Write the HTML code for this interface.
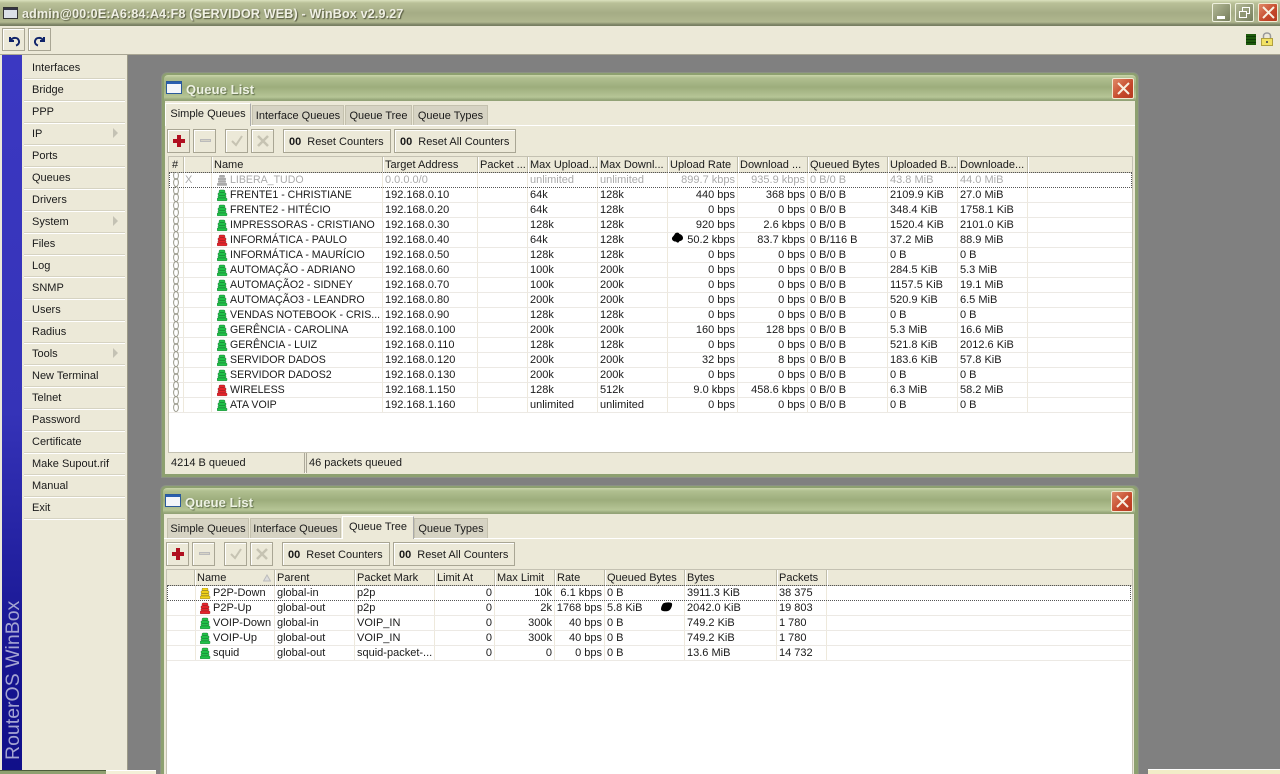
<!DOCTYPE html>
<html><head><meta charset="utf-8"><style>
html,body{margin:0;padding:0;width:1280px;height:774px;overflow:hidden;background:#808080}
body{position:relative;font:11px "Liberation Sans",sans-serif;color:#1a1a1a}
div,span,svg{position:absolute;box-sizing:border-box}
.t{white-space:nowrap;line-height:15px;height:15px;margin-top:1px}
.n{font-size:10.6px}
.r{text-align:right}
.g{color:#aaa}
.mi{left:24px;width:101px;height:22px;border-bottom:1px solid #d6d3c2;box-shadow:0 1px 0 #fff;padding:0}
.mi span{left:8px;top:4px;line-height:15px;white-space:nowrap;font-size:11px}
.ar{left:89px;top:5px;width:0;height:0;border-left:5px solid #c4c2b4;border-top:5px solid transparent;border-bottom:5px solid transparent}
.win{background:#ece9d8;border-left:3px solid #8da070;border-right:3px solid #8da070}
.tb{background:linear-gradient(#cbd6ab 0,#b0bf90 3px,#9dad7c 12px,#b6c596 22px,#93a377 25px)}
.cl{width:22px;height:21px;background:linear-gradient(135deg,#e08a68,#c4472a 60%,#b63a20);border:1px solid #f2ead2;border-radius:2px}
.tab{background:#d6d3c3;border:1px solid #c4c1ae;border-bottom:0;text-align:center;line-height:21px;white-space:nowrap;font-size:11px;height:20px}
.tab.a{background:#ece9d8;border:1px solid #fff;border-right:1px solid #aaa;border-bottom:0;height:23px;line-height:20px;z-index:2}
.btn{height:24px;background:#ece9d8;border:1px solid #a9a694;box-shadow:inset 1px 1px 0 #fff;white-space:nowrap;line-height:24px;font-size:11px}
.btn b{font-size:11px;margin:0 6px 0 5px;letter-spacing:0}
.list{background:#fff;border:1px solid #c4c1b2;overflow:hidden}
.hd{height:16px;background:#ece9d8;top:0;left:0;border-bottom:1px solid #c4c1b2}
.h{top:0;height:16px;border-right:1px solid #c0bdaa;box-shadow:1px 0 0 #fff;padding-left:2px;line-height:17px;white-space:nowrap;overflow:hidden;font-size:11px}
.ln{left:0;height:1px;background:#ece9e4}
.vl{top:16px;width:1px;background:#eee9dc}
.foc{left:0;height:16px;border:1px dotted #555}
.st{top:0;height:20px;background:#ece9d8;border-right:1px solid #aca899;line-height:21px;padding-left:3px;white-space:nowrap;font-size:11px}
</style></head><body>
<svg width="0" height="0" style="left:0;top:0"><defs>
<g id="ic"><rect x="2" y="0" width="6" height="2.6" rx="1.2"/><rect x="1" y="2.800" width="8" height="2.4" rx=".8"/><rect x="1" y="5.400" width="8" height="2.4" rx=".8"/><rect x="0" y="8" width="10" height="2.800" rx=".8"/></g>
<g id="ch" fill="none" stroke="#9a9a8c" stroke-width="1"><ellipse cx="3" cy="3.5" rx="2.400" ry="4"/><ellipse cx="3" cy="10.500" rx="2.400" ry="4"/></g>
</defs></svg>

<div style="left:0;top:0;width:1280px;height:26px;background:linear-gradient(#dbe2bf 0,#b9c098 3px,#a5ac85 13px,#b0b78f 22px,#787f62 25px)"></div>
<svg style="left:3px;top:7px" width="15" height="12"><rect x=".5" y=".5" width="14" height="11" fill="#dce0e8" stroke="#333"/><rect x="1" y="1" width="13" height="2" fill="#334"/></svg>
<div class="t" style="left:22px;top:6px;font-weight:bold;font-size:12.5px;letter-spacing:.18px;color:#f0f0e4;text-shadow:1px 1px 1px #55583f">admin@00:0E:A6:84:A4:F8 (SERVIDOR WEB) - WinBox v2.9.27</div>
<div style="left:1212px;top:3px;width:19px;height:19px;background:linear-gradient(135deg,#b3b996,#767d5c);border:1px solid #eef0de;border-radius:2px"><div style="left:4px;top:12px;width:8px;height:3px;background:#fff"></div></div>
<div style="left:1235px;top:3px;width:19px;height:19px;background:linear-gradient(135deg,#b3b996,#767d5c);border:1px solid #eef0de;border-radius:2px"><div style="left:6px;top:3px;width:8px;height:7px;border:1px solid #fff"></div><div style="left:3px;top:7px;width:8px;height:7px;border:1px solid #fff;background:#8f9673"></div></div>
<div class="cl" style="left:1258px;top:3px;width:20px;height:19px"><svg style="left:3px;top:2px" width="13" height="13"><path d="M1 1L12 12M12 1L1 12" stroke="#f8efe0" stroke-width="2"/></svg></div>

<div style="left:0;top:26px;width:1280px;height:29px;background:#ece9d8;border-bottom:1px solid #a9a694"></div>
<div class="btn" style="left:2px;top:28px;width:23px;height:23px"><svg style="left:3px;top:3px" width="16" height="16"><path d="M4 5L4 9L8 9M4.5 8.5C7 5 12 5 13 9C13.5 11 12 13 10 13.5" fill="none" stroke="#10246a" stroke-width="2"/></svg></div>
<div class="btn" style="left:28px;top:28px;width:23px;height:23px"><svg style="left:3px;top:3px" width="16" height="16"><path d="M12 5L12 9L8 9M11.5 8.5C9 5 4 5 3 9C2.5 11 4 13 6 13.5" fill="none" stroke="#10246a" stroke-width="2"/></svg></div>
<div style="left:1246px;top:34px;width:10px;height:11px;background:repeating-linear-gradient(#1e5a0c 0,#1e5a0c 2px,#0f3d06 2px,#0f3d06 3px)"></div>
<svg style="left:1260px;top:32px" width="14" height="14"><path d="M3.5 7V4C3.5 0 10.500 0 10.500 4V7" fill="none" stroke="#999" stroke-width="1.500"/><rect x="1.500" y="6.500" width="11" height="7" fill="#f2e264" stroke="#b0a040"/><rect x="6" y="9" width="2" height="2" fill="#665"/></svg>

<!-- sidebar -->
<div style="left:0;top:55px;width:128px;height:715px;background:#ece9d8;border-right:1px solid #9c9a88"></div>
<div style="left:2px;top:55px;width:20px;height:715px;background:linear-gradient(#3b38c2 0,#3533b8 50%,#161490 85%,#11108a 100%)"></div>
<div class="t" style="left:13px;top:759px;font-size:19.5px;line-height:20px;height:20px;color:#a4a4d2;transform-origin:0 0;transform:rotate(-90deg) translateY(-10px)">RouterOS WinBox</div>
<div class="mi" style="top:57px"><span>Interfaces</span></div>
<div class="mi" style="top:79px"><span>Bridge</span></div>
<div class="mi" style="top:101px"><span>PPP</span></div>
<div class="mi" style="top:123px"><span>IP</span><div class="ar"></div></div>
<div class="mi" style="top:145px"><span>Ports</span></div>
<div class="mi" style="top:167px"><span>Queues</span></div>
<div class="mi" style="top:189px"><span>Drivers</span></div>
<div class="mi" style="top:211px"><span>System</span><div class="ar"></div></div>
<div class="mi" style="top:233px"><span>Files</span></div>
<div class="mi" style="top:255px"><span>Log</span></div>
<div class="mi" style="top:277px"><span>SNMP</span></div>
<div class="mi" style="top:299px"><span>Users</span></div>
<div class="mi" style="top:321px"><span>Radius</span></div>
<div class="mi" style="top:343px"><span>Tools</span><div class="ar"></div></div>
<div class="mi" style="top:365px"><span>New Terminal</span></div>
<div class="mi" style="top:387px"><span>Telnet</span></div>
<div class="mi" style="top:409px"><span>Password</span></div>
<div class="mi" style="top:431px"><span>Certificate</span></div>
<div class="mi" style="top:453px"><span>Make Supout.rif</span></div>
<div class="mi" style="top:475px"><span>Manual</span></div>
<div class="mi" style="top:497px;border-bottom:1px solid #d6d3c2"><span>Exit</span></div>

<!-- bottom strips -->
<div style="left:0;top:770px;width:106px;height:4px;background:#8fa070;border-top:1px solid #4d5c3a"></div>
<div style="left:106px;top:770px;width:50px;height:4px;background:#f4f0d8;border-top:1px solid #fff"></div>
<div style="left:1148px;top:769px;width:132px;height:5px;background:#f2ecc8;border-top:1px solid #fff"></div>

<!-- TOP WINDOW -->
<div style="left:162px;top:73px;width:976px;height:404px;background:#8da070;border-radius:5px 5px 0 0;box-shadow:0 0 0 1px #8b9185"></div>
<div class="tb" style="left:164px;top:75px;width:972px;height:26px;border-radius:4px 4px 0 0"></div>
<svg style="left:166px;top:81px" width="16" height="14"><rect x=".5" y=".5" width="15" height="12" fill="#f4f6fa" stroke="#2a5a9a"/><rect x="1" y="1" width="14" height="2" fill="#2a5fb0"/></svg>
<div class="t" style="left:186px;top:81px;font-size:13px;font-weight:bold;color:#eef2e4;text-shadow:1px 1px 1px #5d6b48;letter-spacing:.1px">Queue List</div>
<div class="cl" style="left:1112px;top:78px"><svg style="left:4px;top:3px" width="13" height="13"><path d="M1 1L12 12M12 1L1 12" stroke="#f8efe0" stroke-width="2"/></svg></div>
<div style="left:165px;top:101px;width:970px;height:373px;background:#ece9d8"></div>
<div style="left:165px;top:125px;width:970px;height:1px;background:#fff"></div>
<div class="tab a" style="left:165px;top:103px;width:86px">Simple Queues</div>
<div class="tab" style="left:252px;top:105px;width:92px">Interface Queues</div>
<div class="tab" style="left:345px;top:105px;width:67px">Queue Tree</div>
<div class="tab" style="left:413px;top:105px;width:75px">Queue Types</div>
<div class="btn" style="left:167px;top:129px;width:23px"><svg style="left:4px;top:4px" width="14" height="14"><path d="M7 1V13M1 7H13" stroke="#b01020" stroke-width="4"/></svg></div>
<div class="btn" style="left:193px;top:129px;width:23px"><div style="left:6px;top:9px;width:11px;height:3px;background:#d6d3c6;border:1px solid #bbb"></div></div>
<div class="btn" style="left:225px;top:129px;width:23px"><svg style="left:4px;top:4px" width="14" height="14"><path d="M2 7L6 11L12 2" fill="none" stroke="#c6c3b2" stroke-width="2"/></svg></div>
<div class="btn" style="left:251px;top:129px;width:23px"><svg style="left:4px;top:4px" width="14" height="14"><path d="M2 2L12 12M12 2L2 12" fill="none" stroke="#c6c3b2" stroke-width="2.500"/></svg></div>
<div class="btn" style="left:283px;top:129px;width:108px"><b>00</b>Reset Counters</div>
<div class="btn" style="left:394px;top:129px;width:122px"><b>00</b>Reset All Counters</div>

<div class="list" style="left:168px;top:156px;width:965px;height:297px">
<div class="hd" style="width:963px">
<div class="h" style="left:0;width:15px;padding-left:3px">#</div>
<div class="h" style="left:15px;width:28px"></div>
<div class="h" style="left:43px;width:171px">Name</div>
<div class="h" style="left:214px;width:95px">Target Address</div>
<div class="h" style="left:309px;width:50px">Packet ...</div>
<div class="h" style="left:359px;width:70px">Max Upload...</div>
<div class="h" style="left:429px;width:70px">Max Downl...</div>
<div class="h" style="left:499px;width:70px">Upload Rate</div>
<div class="h" style="left:569px;width:70px">Download ...</div>
<div class="h" style="left:639px;width:80px">Queued Bytes</div>
<div class="h" style="left:719px;width:70px">Uploaded B...</div>
<div class="h" style="left:789px;width:70px">Downloade...</div>
</div>
</div>
<!-- grid lines top -->
<div class="vl" style="left:183px;top:172px;height:240px"></div><div class="vl" style="left:211px;top:172px;height:240px"></div><div class="vl" style="left:382px;top:172px;height:240px"></div><div class="vl" style="left:477px;top:172px;height:240px"></div><div class="vl" style="left:527px;top:172px;height:240px"></div><div class="vl" style="left:597px;top:172px;height:240px"></div><div class="vl" style="left:667px;top:172px;height:240px"></div><div class="vl" style="left:737px;top:172px;height:240px"></div><div class="vl" style="left:807px;top:172px;height:240px"></div><div class="vl" style="left:887px;top:172px;height:240px"></div><div class="vl" style="left:957px;top:172px;height:240px"></div><div class="vl" style="left:1027px;top:172px;height:240px"></div>
<div class="ln" style="left:169px;top:202px;width:963px"></div><div class="ln" style="left:169px;top:217px;width:963px"></div><div class="ln" style="left:169px;top:232px;width:963px"></div><div class="ln" style="left:169px;top:247px;width:963px"></div><div class="ln" style="left:169px;top:262px;width:963px"></div><div class="ln" style="left:169px;top:277px;width:963px"></div><div class="ln" style="left:169px;top:292px;width:963px"></div><div class="ln" style="left:169px;top:307px;width:963px"></div><div class="ln" style="left:169px;top:322px;width:963px"></div><div class="ln" style="left:169px;top:337px;width:963px"></div><div class="ln" style="left:169px;top:352px;width:963px"></div><div class="ln" style="left:169px;top:367px;width:963px"></div><div class="ln" style="left:169px;top:382px;width:963px"></div><div class="ln" style="left:169px;top:397px;width:963px"></div><div class="ln" style="left:169px;top:412px;width:963px"></div>
<div class="foc" style="left:169px;top:172px;width:963px"></div>

<!-- chains -->
<svg style="left:173px;top:172px" width="7" height="240"><use href="#ch" y="0"/><use href="#ch" y="15"/><use href="#ch" y="30"/><use href="#ch" y="45"/><use href="#ch" y="60"/><use href="#ch" y="75"/><use href="#ch" y="90"/><use href="#ch" y="105"/><use href="#ch" y="120"/><use href="#ch" y="135"/><use href="#ch" y="150"/><use href="#ch" y="165"/><use href="#ch" y="180"/><use href="#ch" y="195"/><use href="#ch" y="210"/><use href="#ch" y="225"/></svg>
<!-- status icons top -->
<svg style="left:217px;top:175px" width="11" height="236">
<use href="#ic" y="0" fill="#aaa"/>
<g fill="#22c34a" stroke="#0a6a24" stroke-width=".4"><use href="#ic" y="15"/><use href="#ic" y="30"/><use href="#ic" y="45"/></g>
<g fill="#e8242c" stroke="#801414" stroke-width=".4"><use href="#ic" y="60"/></g>
<g fill="#22c34a" stroke="#0a6a24" stroke-width=".4"><use href="#ic" y="75"/><use href="#ic" y="90"/><use href="#ic" y="105"/><use href="#ic" y="120"/><use href="#ic" y="135"/><use href="#ic" y="150"/><use href="#ic" y="165"/><use href="#ic" y="180"/><use href="#ic" y="195"/></g>
<g fill="#e8242c" stroke="#801414" stroke-width=".4"><use href="#ic" y="210"/></g>
<g fill="#22c34a" stroke="#0a6a24" stroke-width=".4"><use href="#ic" y="225"/></g>
</svg>

<div class="t g" style="left:185px;top:172px">X</div>
<div class="t g n" style="left:230px;top:172px">LIBERA_TUDO</div><div class="t g" style="left:385px;top:172px">0.0.0.0/0</div><div class="t g" style="left:530px;top:172px">unlimited</div><div class="t g" style="left:600px;top:172px">unlimited</div><div class="t g r" style="left:667px;width:68px;top:172px">899.7 kbps</div><div class="t g r" style="left:737px;width:68px;top:172px">935.9 kbps</div><div class="t g" style="left:810px;top:172px">0 B/0 B</div><div class="t g" style="left:890px;top:172px">43.8 MiB</div><div class="t g" style="left:960px;top:172px">44.0 MiB</div>

<div class="t n" style="left:230px;top:187px">FRENTE1 - CHRISTIANE</div><div class="t" style="left:385px;top:187px">192.168.0.10</div><div class="t" style="left:530px;top:187px">64k</div><div class="t" style="left:600px;top:187px">128k</div><div class="t r" style="left:667px;width:68px;top:187px">440 bps</div><div class="t r" style="left:737px;width:68px;top:187px">368 bps</div><div class="t" style="left:810px;top:187px">0 B/0 B</div><div class="t" style="left:890px;top:187px">2109.9 KiB</div><div class="t" style="left:960px;top:187px">27.0 MiB</div>

<div class="t n" style="left:230px;top:202px">FRENTE2 - HITÉCIO</div><div class="t" style="left:385px;top:202px">192.168.0.20</div><div class="t" style="left:530px;top:202px">64k</div><div class="t" style="left:600px;top:202px">128k</div><div class="t r" style="left:667px;width:68px;top:202px">0 bps</div><div class="t r" style="left:737px;width:68px;top:202px">0 bps</div><div class="t" style="left:810px;top:202px">0 B/0 B</div><div class="t" style="left:890px;top:202px">348.4 KiB</div><div class="t" style="left:960px;top:202px">1758.1 KiB</div>

<div class="t n" style="left:230px;top:217px">IMPRESSORAS - CRISTIANO</div><div class="t" style="left:385px;top:217px">192.168.0.30</div><div class="t" style="left:530px;top:217px">128k</div><div class="t" style="left:600px;top:217px">128k</div><div class="t r" style="left:667px;width:68px;top:217px">920 bps</div><div class="t r" style="left:737px;width:68px;top:217px">2.6 kbps</div><div class="t" style="left:810px;top:217px">0 B/0 B</div><div class="t" style="left:890px;top:217px">1520.4 KiB</div><div class="t" style="left:960px;top:217px">2101.0 KiB</div>

<div class="t n" style="left:230px;top:232px">INFORMÁTICA - PAULO</div><div class="t" style="left:385px;top:232px">192.168.0.40</div><div class="t" style="left:530px;top:232px">64k</div><div class="t" style="left:600px;top:232px">128k</div><div class="t r" style="left:667px;width:68px;top:232px">50.2 kbps</div><div class="t r" style="left:737px;width:68px;top:232px">83.7 kbps</div><div class="t" style="left:810px;top:232px">0 B/116 B</div><div class="t" style="left:890px;top:232px">37.2 MiB</div><div class="t" style="left:960px;top:232px">88.9 MiB</div>

<div class="t n" style="left:230px;top:247px">INFORMÁTICA - MAURÍCIO</div><div class="t" style="left:385px;top:247px">192.168.0.50</div><div class="t" style="left:530px;top:247px">128k</div><div class="t" style="left:600px;top:247px">128k</div><div class="t r" style="left:667px;width:68px;top:247px">0 bps</div><div class="t r" style="left:737px;width:68px;top:247px">0 bps</div><div class="t" style="left:810px;top:247px">0 B/0 B</div><div class="t" style="left:890px;top:247px">0 B</div><div class="t" style="left:960px;top:247px">0 B</div>

<div class="t n" style="left:230px;top:262px">AUTOMAÇÃO - ADRIANO</div><div class="t" style="left:385px;top:262px">192.168.0.60</div><div class="t" style="left:530px;top:262px">100k</div><div class="t" style="left:600px;top:262px">200k</div><div class="t r" style="left:667px;width:68px;top:262px">0 bps</div><div class="t r" style="left:737px;width:68px;top:262px">0 bps</div><div class="t" style="left:810px;top:262px">0 B/0 B</div><div class="t" style="left:890px;top:262px">284.5 KiB</div><div class="t" style="left:960px;top:262px">5.3 MiB</div>

<div class="t n" style="left:230px;top:277px">AUTOMAÇÃO2 - SIDNEY</div><div class="t" style="left:385px;top:277px">192.168.0.70</div><div class="t" style="left:530px;top:277px">100k</div><div class="t" style="left:600px;top:277px">200k</div><div class="t r" style="left:667px;width:68px;top:277px">0 bps</div><div class="t r" style="left:737px;width:68px;top:277px">0 bps</div><div class="t" style="left:810px;top:277px">0 B/0 B</div><div class="t" style="left:890px;top:277px">1157.5 KiB</div><div class="t" style="left:960px;top:277px">19.1 MiB</div>

<div class="t n" style="left:230px;top:292px">AUTOMAÇÃO3 - LEANDRO</div><div class="t" style="left:385px;top:292px">192.168.0.80</div><div class="t" style="left:530px;top:292px">200k</div><div class="t" style="left:600px;top:292px">200k</div><div class="t r" style="left:667px;width:68px;top:292px">0 bps</div><div class="t r" style="left:737px;width:68px;top:292px">0 bps</div><div class="t" style="left:810px;top:292px">0 B/0 B</div><div class="t" style="left:890px;top:292px">520.9 KiB</div><div class="t" style="left:960px;top:292px">6.5 MiB</div>

<div class="t n" style="left:230px;top:307px">VENDAS NOTEBOOK - CRIS...</div><div class="t" style="left:385px;top:307px">192.168.0.90</div><div class="t" style="left:530px;top:307px">128k</div><div class="t" style="left:600px;top:307px">128k</div><div class="t r" style="left:667px;width:68px;top:307px">0 bps</div><div class="t r" style="left:737px;width:68px;top:307px">0 bps</div><div class="t" style="left:810px;top:307px">0 B/0 B</div><div class="t" style="left:890px;top:307px">0 B</div><div class="t" style="left:960px;top:307px">0 B</div>

<div class="t n" style="left:230px;top:322px">GERÊNCIA - CAROLINA</div><div class="t" style="left:385px;top:322px">192.168.0.100</div><div class="t" style="left:530px;top:322px">200k</div><div class="t" style="left:600px;top:322px">200k</div><div class="t r" style="left:667px;width:68px;top:322px">160 bps</div><div class="t r" style="left:737px;width:68px;top:322px">128 bps</div><div class="t" style="left:810px;top:322px">0 B/0 B</div><div class="t" style="left:890px;top:322px">5.3 MiB</div><div class="t" style="left:960px;top:322px">16.6 MiB</div>

<div class="t n" style="left:230px;top:337px">GERÊNCIA - LUIZ</div><div class="t" style="left:385px;top:337px">192.168.0.110</div><div class="t" style="left:530px;top:337px">128k</div><div class="t" style="left:600px;top:337px">128k</div><div class="t r" style="left:667px;width:68px;top:337px">0 bps</div><div class="t r" style="left:737px;width:68px;top:337px">0 bps</div><div class="t" style="left:810px;top:337px">0 B/0 B</div><div class="t" style="left:890px;top:337px">521.8 KiB</div><div class="t" style="left:960px;top:337px">2012.6 KiB</div>

<div class="t n" style="left:230px;top:352px">SERVIDOR DADOS</div><div class="t" style="left:385px;top:352px">192.168.0.120</div><div class="t" style="left:530px;top:352px">200k</div><div class="t" style="left:600px;top:352px">200k</div><div class="t r" style="left:667px;width:68px;top:352px">32 bps</div><div class="t r" style="left:737px;width:68px;top:352px">8 bps</div><div class="t" style="left:810px;top:352px">0 B/0 B</div><div class="t" style="left:890px;top:352px">183.6 KiB</div><div class="t" style="left:960px;top:352px">57.8 KiB</div>

<div class="t n" style="left:230px;top:367px">SERVIDOR DADOS2</div><div class="t" style="left:385px;top:367px">192.168.0.130</div><div class="t" style="left:530px;top:367px">200k</div><div class="t" style="left:600px;top:367px">200k</div><div class="t r" style="left:667px;width:68px;top:367px">0 bps</div><div class="t r" style="left:737px;width:68px;top:367px">0 bps</div><div class="t" style="left:810px;top:367px">0 B/0 B</div><div class="t" style="left:890px;top:367px">0 B</div><div class="t" style="left:960px;top:367px">0 B</div>

<div class="t n" style="left:230px;top:382px">WIRELESS</div><div class="t" style="left:385px;top:382px">192.168.1.150</div><div class="t" style="left:530px;top:382px">128k</div><div class="t" style="left:600px;top:382px">512k</div><div class="t r" style="left:667px;width:68px;top:382px">9.0 kbps</div><div class="t r" style="left:737px;width:68px;top:382px">458.6 kbps</div><div class="t" style="left:810px;top:382px">0 B/0 B</div><div class="t" style="left:890px;top:382px">6.3 MiB</div><div class="t" style="left:960px;top:382px">58.2 MiB</div>

<div class="t n" style="left:230px;top:397px">ATA VOIP</div><div class="t" style="left:385px;top:397px">192.168.1.160</div><div class="t" style="left:530px;top:397px">unlimited</div><div class="t" style="left:600px;top:397px">unlimited</div><div class="t r" style="left:667px;width:68px;top:397px">0 bps</div><div class="t r" style="left:737px;width:68px;top:397px">0 bps</div><div class="t" style="left:810px;top:397px">0 B/0 B</div><div class="t" style="left:890px;top:397px">0 B</div><div class="t" style="left:960px;top:397px">0 B</div>

<svg style="left:671px;top:232px" width="13" height="12"><path d="M4 1.500C6 0 8 .5 8.500 2C10.500 2.500 12 4 12 6C12 8 10 9 8.500 9C8 11 6 11 5 9.500C3 10 .5 8 1 6C1.500 4.500 3 4 4 1.500Z" fill="#000"/></svg>

<div style="left:168px;top:453px;width:965px;height:20px;background:#ece9d8;border-bottom:1px solid #fff"></div>
<div class="st" style="left:168px;top:453px;width:137px">4214 B queued</div>
<div class="st" style="left:306px;top:453px;width:827px;border-left:1px solid #aca899;padding-left:2px;border-right:0">46 packets queued</div>

<!-- BOTTOM WINDOW -->
<div style="left:161px;top:486px;width:977px;height:288px;background:#8da070;border-radius:5px 5px 0 0;box-shadow:0 0 0 1px #8b9185"></div>
<div class="tb" style="left:163px;top:488px;width:972px;height:26px;border-radius:4px 4px 0 0"></div>
<svg style="left:165px;top:494px" width="16" height="14"><rect x=".5" y=".5" width="15" height="12" fill="#f4f6fa" stroke="#2a5a9a"/><rect x="1" y="1" width="14" height="2" fill="#2a5fb0"/></svg>
<div class="t" style="left:185px;top:494px;font-size:13px;font-weight:bold;color:#eef2e4;text-shadow:1px 1px 1px #5d6b48;letter-spacing:.1px">Queue List</div>
<div class="cl" style="left:1111px;top:491px"><svg style="left:4px;top:3px" width="13" height="13"><path d="M1 1L12 12M12 1L1 12" stroke="#f8efe0" stroke-width="2"/></svg></div>
<div style="left:164px;top:514px;width:970px;height:260px;background:#ece9d8"></div>
<div style="left:164px;top:538px;width:970px;height:1px;background:#fff"></div>
<div class="tab" style="left:167px;top:518px;width:82px">Simple Queues</div>
<div class="tab" style="left:250px;top:518px;width:91px">Interface Queues</div>
<div class="tab a" style="left:342px;top:516px;width:72px">Queue Tree</div>
<div class="tab" style="left:414px;top:518px;width:74px">Queue Types</div>
<div class="btn" style="left:166px;top:542px;width:23px"><svg style="left:4px;top:4px" width="14" height="14"><path d="M7 1V13M1 7H13" stroke="#b01020" stroke-width="4"/></svg></div>
<div class="btn" style="left:192px;top:542px;width:23px"><div style="left:6px;top:9px;width:11px;height:3px;background:#d6d3c6;border:1px solid #bbb"></div></div>
<div class="btn" style="left:224px;top:542px;width:23px"><svg style="left:4px;top:4px" width="14" height="14"><path d="M2 7L6 11L12 2" fill="none" stroke="#c6c3b2" stroke-width="2"/></svg></div>
<div class="btn" style="left:250px;top:542px;width:23px"><svg style="left:4px;top:4px" width="14" height="14"><path d="M2 2L12 12M12 2L2 12" fill="none" stroke="#c6c3b2" stroke-width="2.500"/></svg></div>
<div class="btn" style="left:282px;top:542px;width:108px"><b>00</b>Reset Counters</div>
<div class="btn" style="left:393px;top:542px;width:122px"><b>00</b>Reset All Counters</div>

<div class="list" style="left:166px;top:569px;width:967px;height:205px;border-bottom:0">
<div class="hd" style="width:965px">
<div class="h" style="left:0;width:28px"></div>
<div class="h" style="left:28px;width:80px">Name</div>
<div class="h" style="left:108px;width:80px">Parent</div>
<div class="h" style="left:188px;width:80px">Packet Mark</div>
<div class="h" style="left:268px;width:60px">Limit At</div>
<div class="h" style="left:328px;width:60px">Max Limit</div>
<div class="h" style="left:388px;width:50px">Rate</div>
<div class="h" style="left:438px;width:80px">Queued Bytes</div>
<div class="h" style="left:518px;width:92px">Bytes</div>
<div class="h" style="left:610px;width:50px">Packets</div>
</div>
</div>
<svg style="left:263px;top:574px" width="8" height="8"><path d="M4 1L7.500 7H.5Z" fill="#ddd" stroke="#bbb"/></svg>
<div class="vl" style="left:195px;top:585px;height:75px"></div><div class="vl" style="left:274px;top:585px;height:75px"></div><div class="vl" style="left:354px;top:585px;height:75px"></div><div class="vl" style="left:434px;top:585px;height:75px"></div><div class="vl" style="left:494px;top:585px;height:75px"></div><div class="vl" style="left:554px;top:585px;height:75px"></div><div class="vl" style="left:604px;top:585px;height:75px"></div><div class="vl" style="left:684px;top:585px;height:75px"></div><div class="vl" style="left:776px;top:585px;height:75px"></div><div class="vl" style="left:826px;top:585px;height:75px"></div>
<div class="ln" style="left:167px;top:615px;width:964px"></div><div class="ln" style="left:167px;top:630px;width:964px"></div><div class="ln" style="left:167px;top:645px;width:964px"></div><div class="ln" style="left:167px;top:660px;width:964px"></div>
<div class="foc" style="left:167px;top:585px;width:964px"></div>

<svg style="left:200px;top:588px" width="11" height="71">
<g fill="#f4d41c" stroke="#6c5a10" stroke-width=".4"><use href="#ic" y="0"/></g>
<g fill="#e8242c" stroke="#801414" stroke-width=".4"><use href="#ic" y="15"/></g>
<g fill="#22c34a" stroke="#0a6a24" stroke-width=".4"><use href="#ic" y="30"/><use href="#ic" y="45"/><use href="#ic" y="60"/></g>
</svg>

<div class="t" style="left:213px;top:585px">P2P-Down</div><div class="t" style="left:277px;top:585px">global-in</div><div class="t" style="left:357px;top:585px">p2p</div><div class="t r" style="left:434px;width:58px;top:585px">0</div><div class="t r" style="left:494px;width:58px;top:585px">10k</div><div class="t r" style="left:554px;width:48px;top:585px">6.1 kbps</div><div class="t" style="left:607px;top:585px">0 B</div><div class="t" style="left:687px;top:585px">3911.3 KiB</div><div class="t" style="left:779px;top:585px">38 375</div>

<div class="t" style="left:213px;top:600px">P2P-Up</div><div class="t" style="left:277px;top:600px">global-out</div><div class="t" style="left:357px;top:600px">p2p</div><div class="t r" style="left:434px;width:58px;top:600px">0</div><div class="t r" style="left:494px;width:58px;top:600px">2k</div><div class="t r" style="left:554px;width:48px;top:600px">1768 bps</div><div class="t" style="left:607px;top:600px">5.8 KiB</div><div class="t" style="left:687px;top:600px">2042.0 KiB</div><div class="t" style="left:779px;top:600px">19 803</div>

<div class="t" style="left:213px;top:615px">VOIP-Down</div><div class="t" style="left:277px;top:615px">global-in</div><div class="t" style="left:357px;top:615px">VOIP_IN</div><div class="t r" style="left:434px;width:58px;top:615px">0</div><div class="t r" style="left:494px;width:58px;top:615px">300k</div><div class="t r" style="left:554px;width:48px;top:615px">40 bps</div><div class="t" style="left:607px;top:615px">0 B</div><div class="t" style="left:687px;top:615px">749.2 KiB</div><div class="t" style="left:779px;top:615px">1 780</div>

<div class="t" style="left:213px;top:630px">VOIP-Up</div><div class="t" style="left:277px;top:630px">global-out</div><div class="t" style="left:357px;top:630px">VOIP_IN</div><div class="t r" style="left:434px;width:58px;top:630px">0</div><div class="t r" style="left:494px;width:58px;top:630px">300k</div><div class="t r" style="left:554px;width:48px;top:630px">40 bps</div><div class="t" style="left:607px;top:630px">0 B</div><div class="t" style="left:687px;top:630px">749.2 KiB</div><div class="t" style="left:779px;top:630px">1 780</div>

<div class="t" style="left:213px;top:645px">squid</div><div class="t" style="left:277px;top:645px">global-out</div><div class="t" style="left:357px;top:645px">squid-packet-...</div><div class="t r" style="left:434px;width:58px;top:645px">0</div><div class="t r" style="left:494px;width:58px;top:645px">0</div><div class="t r" style="left:554px;width:48px;top:645px">0 bps</div><div class="t" style="left:607px;top:645px">0 B</div><div class="t" style="left:687px;top:645px">13.6 MiB</div><div class="t" style="left:779px;top:645px">14 732</div>

<svg style="left:660px;top:602px" width="13" height="10"><path d="M3 1.500C6 0 11 0 12 1.500C12.500 3.500 11 8 8 9C5 9.500 1 9.500 1 7C1 5 2 3 3 1.500Z" fill="#000"/></svg>
</body></html>
